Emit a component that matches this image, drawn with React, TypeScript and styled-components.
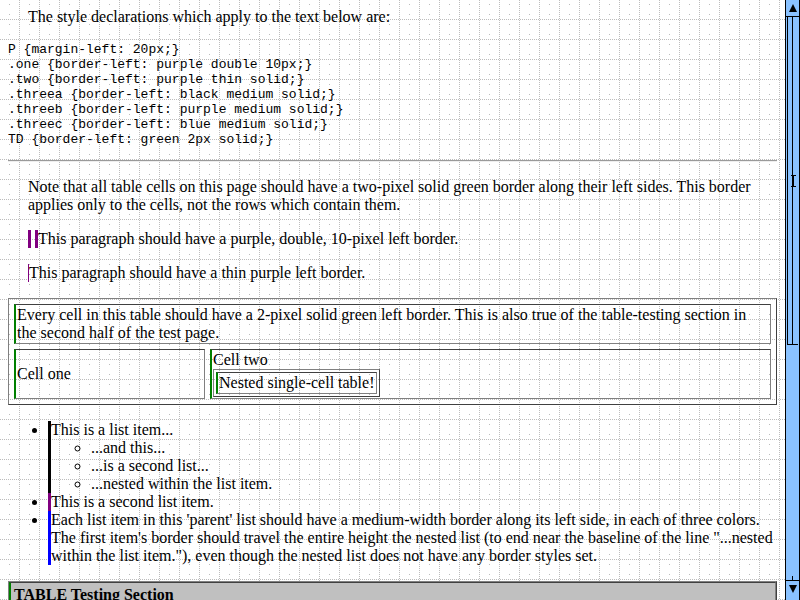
import React from "react";
import styled, { createGlobalStyle } from "styled-components";

// graph-paper tile: dotted lines on the right and bottom edge, a few dots inside
const tilePath = (() => {
  let d = "";
  for (let i = 0; i < 20; i += 2) {
    d += `M19 ${i}h1v1h-1z`;
    d += `M${i} 19h1v1h-1z`;
  }
  d += "M9 4h1v1h-1zM9 14h1v1h-1z";
  return d;
})();

const tileSvg = `<svg xmlns="http://www.w3.org/2000/svg" width="20" height="20" shape-rendering="crispEdges"><path fill="#bcbcbc" d="${tilePath}"/></svg>`;
const gridBg = `url("data:image/svg+xml,${encodeURIComponent(tileSvg)}")`;

const GlobalStyle = createGlobalStyle`
  html, body {
    margin: 0;
    padding: 0;
    overflow: hidden;
    background: #fff;
  }
`;

const Window = styled.div`
  width: 800px;
  height: 600px;
  display: flex;
  overflow: hidden;
`;

const Page = styled.div`
  flex: 1;
  height: 600px;
  box-sizing: border-box;
  overflow: hidden;
  padding: 8px;
  background-color: #fff;
  background-image: ${gridBg};
  font-family: "Liberation Serif", "Times New Roman", serif;
  font-size: 16px;
  line-height: 18px;
  color: #000;
`;

const Para = styled.p<{ $first?: boolean; $border?: "double" | "thin" }>`
  margin: ${(p) => (p.$first ? "0 0 16px 20px" : "16px 0 16px 20px")};
  ${(p) => (p.$border === "double" ? "border-left: 10px double #800080;" : "")}
  ${(p) => (p.$border === "thin" ? "border-left: 1px solid #800080;" : "")}
`;

const Styles = styled.pre`
  margin: 13px 0;
  font-family: "Liberation Mono", "Courier New", monospace;
  font-size: 13px;
  line-height: 15px;
`;

const Rule = styled.hr`
  margin: 8px 0;
  height: 0;
  border: none;
  border-top: 1px solid #9a9a9a;
  border-bottom: 1px solid #eeeeee;
`;

const Table = styled.table<{ $spacing: number; $full?: boolean }>`
  border-collapse: separate;
  border-spacing: ${(p) => p.$spacing}px;
  border: 1px solid;
  border-color: #808080 #404040 #404040 #808080;
  ${(p) => (p.$full ? "width: 100%;" : "")}
  font-size: 16px;
  line-height: 18px;
`;

const Cell = styled.td<{ $width?: number; $pad?: number; $fill?: string }>`
  box-sizing: border-box;
  border: 1px solid;
  border-color: #404040 #808080 #808080 #404040;
  border-left: 2px solid #008000;
  padding: ${(p) => p.$pad ?? 1}px;
  ${(p) => (p.$width ? `width: ${p.$width}px;` : "")}
  ${(p) => (p.$fill ? `background: ${p.$fill};` : "")}
  vertical-align: middle;
  text-align: left;
`;

const List = styled.ul`
  margin: 16px 0;
  padding-left: 40px;
  list-style: disc;
`;

const SubList = styled.ul`
  margin: 0;
  padding-left: 40px;
  list-style: circle;
`;

const Item = styled.li<{ $color: string }>`
  border-left: 3px solid ${(p) => p.$color};
`;

const ScrollBar = styled.div`
  width: 15px;
  height: 600px;
  flex: none;
  box-sizing: border-box;
  border-left: 1px solid #000;
  border-right: 1px solid #000;
  background: #8ac2ff;
  display: flex;
  flex-direction: column;
`;

const ArrowButton = styled.div<{ $down?: boolean }>`
  height: 16px;
  flex: none;
  display: flex;
  align-items: center;
  justify-content: center;
  position: relative;
  ${(p) =>
    p.$down
      ? `
    border-top: 1px solid #000;
    margin-bottom: 3px;
    &::before {
      content: "";
      position: absolute;
      left: 6px;
      top: -5px;
      width: 1px;
      height: 4px;
      background: #000;
    }
  `
      : "border-bottom: 1px solid #000;"}
`;

const Arrow = styled.div<{ $down?: boolean }>`
  width: 0;
  height: 0;
  border-left: 4px solid transparent;
  border-right: 4px solid transparent;
  ${(p) =>
    p.$down ? "border-top: 8px solid #000;" : "border-bottom: 8px solid #000;"}
`;

const Thumb = styled.div`
  height: 328px;
  flex: none;
  box-sizing: border-box;
  margin: 0 1px 0 1px;
  border-left: 1px solid #000;
  border-bottom: 1px solid #000;
  display: flex;
  align-items: center;
  justify-content: center;
  position: relative;
`;

const ThumbLine = styled.div`
  position: absolute;
  top: 0;
  bottom: 0;
  left: 4px;
  width: 1px;
  background: #000;
`;

const Grip = styled.div`
  width: 5px;
  height: 10px;
  border-top: 1px solid #000;
  border-bottom: 1px solid #000;
  display: flex;
  justify-content: center;
  &::before {
    content: "";
    width: 1px;
    background: #000;
  }
`;

const Track = styled.div`
  flex: 1;
`;

export default function App() {
  return (
    <Window>
      <GlobalStyle />
      <Page>
        <Para $first>The style declarations which apply to the text below are:</Para>
        <Styles>{`P {margin-left: 20px;}
.one {border-left: purple double 10px;}
.two {border-left: purple thin solid;}
.threea {border-left: black medium solid;}
.threeb {border-left: purple medium solid;}
.threec {border-left: blue medium solid;}
TD {border-left: green 2px solid;}`}</Styles>
        <Rule />
        <Para>
          Note that all table cells on this page should have a two-pixel solid green border along their left
          sides. This border applies only to the cells, not the rows which contain them.
        </Para>
        <Para $border="double">This paragraph should have a purple, double, 10-pixel left border.</Para>
        <Para $border="thin">This paragraph should have a thin purple left border.</Para>
        <Table $spacing={5} $full>
          <tbody>
            <tr>
              <Cell colSpan={2}>
                Every cell in this table should have a 2-pixel solid green left border. This is also true of the
                table-testing section in the second half of the test page.
              </Cell>
            </tr>
            <tr>
              <Cell $width={191}>Cell one</Cell>
              <Cell>
                Cell two
                <Table $spacing={2}>
                  <tbody>
                    <tr>
                      <Cell>Nested single-cell table!</Cell>
                    </tr>
                  </tbody>
                </Table>
              </Cell>
            </tr>
          </tbody>
        </Table>
        <List>
          <Item $color="#000">
            This is a list item...
            <SubList>
              <li>...and this...</li>
              <li>...is a second list...</li>
              <li>...nested within the list item.</li>
            </SubList>
          </Item>
          <Item $color="#800080">This is a second list item.</Item>
          <Item $color="#0000ff">
            Each list item in this 'parent' list should have a medium-width border along its left side, in each of
            three colors. The first item's border should travel the entire height the nested list (to end near the
            baseline of the line "...nested within the list item."), even though the nested list does not have any
            border styles set.
          </Item>
        </List>
        <Table $spacing={0} $full>
          <tbody>
            <tr>
              <Cell $pad={3} $fill="#c0c0c0">
                <strong>TABLE Testing Section</strong>
              </Cell>
            </tr>
          </tbody>
        </Table>
      </Page>
      <ScrollBar>
        <ArrowButton>
          <Arrow />
        </ArrowButton>
        <Thumb>
          <ThumbLine />
          <Grip />
        </Thumb>
        <Track />
        <ArrowButton $down>
          <Arrow $down />
        </ArrowButton>
      </ScrollBar>
    </Window>
  );
}
